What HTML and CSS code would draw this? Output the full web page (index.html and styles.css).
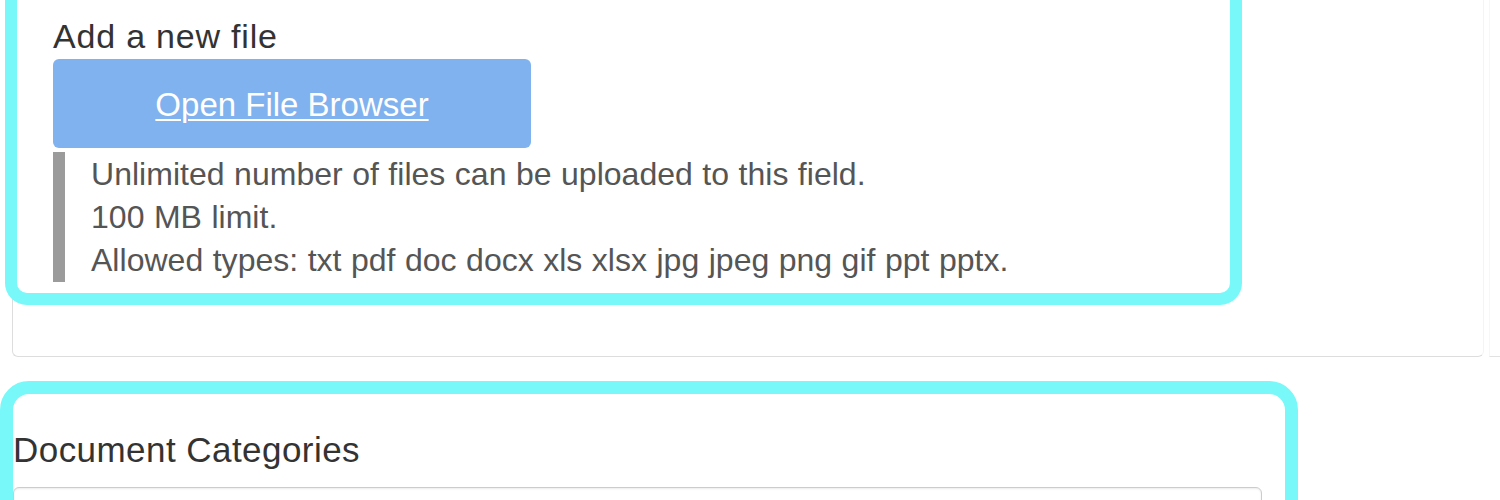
FILE: index.html
```html
<!DOCTYPE html>
<html lang="en">
<head>
<meta charset="utf-8">
<title>Add a new file</title>
<link rel="stylesheet" href="styles.css">
</head>
<body>
<div class="page">
  <div class="panel-row">
    <div class="panel">
      <div class="field field-file">
        <div class="field-label">Add a new file</div>
        <div class="upload-btn"><a href="#" class="upload-link">Open File Browser</a></div>
        <div class="help">
          <div>Unlimited number of files can be uploaded to this field.</div>
          <div>100 MB limit.</div>
          <div>Allowed types: txt pdf doc docx xls xlsx jpg jpeg png gif ppt pptx.</div>
        </div>
      </div>
    </div>
    <div class="panel-stub"></div>
  </div>
  <div class="field field-cats">
    <div class="cats-label">Document Categories</div>
    <div class="cats-input"></div>
  </div>
</div>
</body>
</html>
```

FILE: styles.css
```css
html, body {
  margin: 0;
  padding: 0;
  background: #ffffff;
  overflow: hidden;
}
body {
  font-family: "Liberation Sans", Arial, Helvetica, sans-serif;
  color: #333333;
}
.page {
  margin-top: -60px;
  padding-left: 12px;
}
.panel-row {
  display: flex;
  gap: 5px;
}
.panel {
  width: 1466px;
  flex: none;
  border: 1px solid #dddddd;
  border-right-color: #f4f4f4;
  border-top: none;
  border-radius: 0 0 6px 6px;
  padding: 0 0 63px 4px;
  box-sizing: content-box;
}
.panel-stub {
  flex: 1;
  border-bottom: 1px solid #e2e2e2;
  border-left: 1px solid #f7f7f7;
}
.field {
  outline: 12px solid #78f8f8;
  outline-offset: 0;
  background: #ffffff;
}
.field-file {
  width: 1213px;
  box-sizing: border-box;
  padding: 76px 0 12px 36px;
  border-radius: 10px;
}
.field-label {
  font-size: 34px;
  line-height: 40px;
  color: #333333;
  margin-bottom: 3px;
  letter-spacing: 0.8px;
}
.upload-btn {
  width: 478px;
  height: 89px;
  box-sizing: border-box;
  background: #7fb2ee;
  border-radius: 6px;
  display: flex;
  align-items: center;
  justify-content: center;
  padding-top: 3px;
}
.upload-link {
  color: #ffffff;
  font-size: 33px;
  text-decoration: underline;
  text-decoration-thickness: 2px;
  text-underline-offset: 3px;
}
.help {
  margin-top: 4px;
  border-left: 12px solid #9b9b9b;
  padding-left: 26px;
  font-size: 32px;
  line-height: 43px;
  color: #555555;
  letter-spacing: 0.03px;
  word-spacing: 0.5px;
}
.help div {
  padding-top: 1px;
  margin-bottom: -1px;
}
.field-cats {
  margin: 37px 0 0 1px;
  width: 1272px;
  padding-top: 36px;
  border-radius: 16px;
  outline-width: 13px;
}
.cats-label {
  font-size: 35px;
  line-height: 40px;
  color: #333333;
  margin-bottom: 17px;
  letter-spacing: 0.45px;
}
.cats-input {
  width: 1249px;
  height: 60px;
  box-sizing: border-box;
  border: 1px solid #cccccc;
  border-radius: 6px;
  box-shadow: inset 0 1px 2px rgba(0,0,0,0.08);
}
```
